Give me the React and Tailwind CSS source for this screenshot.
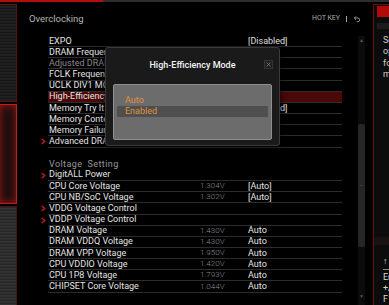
import React from 'react';

const mainRows = [
    { label: 'EXPO', value: '[Disabled]' },
    { label: 'DRAM Frequency', value: '[Auto]' },
    { label: 'Adjusted DRAM Frequency', dim: true },
    { label: 'FCLK Frequency', value: '[Auto]' },
    { label: 'UCLK DIV1 MODE', value: '[Auto]' },
    { label: 'High-Efficiency Mode', value: '[Auto]', active: true },
    { label: 'Memory Try It !', value: '[Disabled]' },
    { label: 'Memory Context Restore', value: '[Auto]' },
    { label: 'Memory Failure Retry', value: '[Auto]' },
    { label: 'Advanced DRAM Configuration', sub: true },
];

const voltageRows = [
    { label: 'DigitALL Power', sub: true },
    { label: 'CPU Core Voltage', volt: '1.304V', value: '[Auto]' },
    { label: 'CPU NB/SoC Voltage', volt: '1.302V', value: '[Auto]' },
    { label: 'VDDG Voltage Control', sub: true },
    { label: 'VDDP Voltage Control', sub: true },
    { label: 'DRAM Voltage', volt: '1.430V', value: 'Auto' },
    { label: 'DRAM VDDQ Voltage', volt: '1.430V', value: 'Auto' },
    { label: 'DRAM VPP Voltage', volt: '1.950V', value: 'Auto' },
    { label: 'CPU VDDIO Voltage', volt: '1.420V', value: 'Auto' },
    { label: 'CPU 1P8 Voltage', volt: '1.793V', value: 'Auto' },
    { label: 'CHIPSET Core Voltage', volt: '1.044V', value: 'Auto' },
];

const Chevron = () => (
    <svg viewBox="0 0 6 8" className="w-[5px] h-[7px]">
        <path d="M1 1l3.5 3L1 7" fill="none" stroke="#c81e1e" strokeWidth="1.6" />
    </svg>
);

const Row = ({ row }) => (
    <div className="flex h-[11.17px] items-center">
        <div className="w-[10px] flex items-center justify-start pl-[3px]">
            {row.sub && <Chevron />}
        </div>
        <div
            className={`flex-1 h-full flex items-center border-b border-[#2c2c2c] pl-[1px] ${row.active ? 'bg-[#4a0808]' : ''}`}
        >
            <span className={`w-[151px] whitespace-nowrap ${row.dim ? 'text-[#8a8a8a]' : 'text-[#e4e4e4]'}`}>
                {row.label}
            </span>
            <span className="w-[48px] text-[8px] font-light text-[#8c8c8c]">{row.volt}</span>
            <span className="text-[#e4e4e4] whitespace-nowrap">{row.value}</span>
        </div>
    </div>
);

const App = () => {
    return (
        <div
            className="relative w-[389px] h-[305px] overflow-hidden bg-black text-[9px] leading-none"
            style={{ fontFamily: 'Roboto, "Liberation Sans", sans-serif' }}
        >
            {/* top strip */}
            <div className="flex h-[3px]">
                <div className="w-[103px] bg-[#b50d0d] h-[2px]" />
                <div className="flex-1 bg-[#2e2e2e] h-[2px]" />
            </div>

            <div className="flex h-[302px] pt-[1px]">
                {/* left sidebar */}
                <div className="w-[17px] flex flex-col gap-[2px]">
                    <div className="h-[98px] border border-l-0 border-[#5a1212] bg-[repeating-linear-gradient(180deg,#161616_0px,#161616_1px,#222_1px,#222_2px,#1b1b1b_3px)]" />
                    <div className="h-[100px] border border-l-0 border-[#c01c1c] bg-[#1a0e0e] shadow-[inset_0_0_8px_#a01414]" />
                    <div className="flex-1 border border-l-0 border-b-0 border-[#4a1212] bg-[repeating-linear-gradient(180deg,#262626_0px,#262626_1px,#333_1px,#333_2px,#2a2a2a_3px)]" />
                </div>

                {/* main panel */}
                <div className="flex-1 flex flex-col">
                    <div className="h-[32px] flex items-center pl-[12px] pr-[12px] pb-[3px]">
                        <span className="text-[#b4b4b4] text-[9.5px]">Overclocking</span>
                        <div className="ml-auto flex items-center gap-[6px] text-[#a8a8a8] text-[7px]">
                            <span>HOT KEY</span>
                            <span className="w-px h-[6px] bg-[#a8a8a8]" />
                            <svg viewBox="0 0 24 24" className="w-[8px] h-[8px]" fill="none" stroke="#a8a8a8" strokeWidth="2.6">
                                <path d="M9 14 4 9l5-5" />
                                <path d="M4 9h10.5a5.5 5.5 0 0 1 0 11H11" />
                            </svg>
                        </div>
                    </div>

                    <div className="flex flex-1">
                        <div className="ml-[21px] w-[304px] flex flex-col">
                            {mainRows.map(r => <Row key={r.label} row={r} />)}
                            <div className="h-[11.17px]" />
                            <div className="h-[11.17px] flex items-center pl-[11px] text-[#9a9a9a] tracking-[0.4px]">
                                Voltage&nbsp; Setting
                            </div>
                            {voltageRows.map(r => <Row key={r.label} row={r} />)}
                        </div>

                        {/* scrollbar */}
                        <div className="ml-[16px] w-[7px] flex flex-col items-center pt-[2px] pb-[6px] bg-[#0b0b0b]">
                            <span className="text-[5px] text-[#555]">▲</span>
                            <div className="mt-[81px] w-[7px] h-[123px] rounded-[2px] bg-[#262626] flex items-center justify-center">
                                <div className="w-[3px] h-px bg-[#3a3a3a]" />
                            </div>
                            <span className="mt-auto text-[5px] text-[#555]">▼</span>
                        </div>
                    </div>
                </div>

                {/* right help panel */}
                <div className="w-[16px] border-l border-t border-[#6e0c0c] bg-[#0c0c0c] flex flex-col pl-[3px] overflow-hidden">
                    <div className="h-[11px] mt-px bg-[#b00a0a]" />
                    <div className="h-[6px] mt-[6px] bg-[#1c1c1c]" />
                    <div className="pl-[6px] mt-[7px] flex flex-col gap-[2.3px] text-[#cfcfcf] whitespace-nowrap leading-[9px]">
                        <span>Sets</span>
                        <span>operating</span>
                        <span>for</span>
                        <span>memory</span>
                    </div>
                    <div className="mt-auto h-[8px] bg-[#1a1212] -ml-[3px]" />
                    <div className="pl-[6px] mt-[11px] flex flex-col text-[#d8d8d8] whitespace-nowrap leading-[11px]">
                        <span className="border-b border-[#8a8a8a] pb-[2px] mb-[2px]">↑↓: Move</span>
                        <span>Enter: Select</span>
                        <span>+/-: Value</span>
                        <span>F1: General Help</span>
                    </div>
                </div>
            </div>

            {/* dialog */}
            <div className="absolute left-[105px] top-[47px] w-[175px] h-[99px] rounded-[3px] border border-[#3a3a3a] bg-[#1a1a1a] shadow-[0_0_6px_rgba(0,0,0,0.8)]">
                <div className="relative h-[34px] flex items-center justify-center">
                    <span className="text-[#f4f4f4] text-[9px] font-medium">High-Efficiency Mode</span>
                    <div className="absolute left-[158px] top-[12px] w-[9px] h-[9px] border border-[#333] bg-[#202020] flex items-center justify-center">
                        <svg viewBox="0 0 10 10" className="w-[5px] h-[5px]" stroke="#8a8a8a" strokeWidth="1.4">
                            <path d="M1 1l8 8M9 1l-8 8" />
                        </svg>
                    </div>
                </div>
                <div className="mx-[7px] mt-[2px] h-[56px] rounded-[2px] border border-[#8f8f8f] bg-[#6c6c6c] pt-[10px] px-[3px]">
                    <div className="h-[11px] flex items-center pl-[8px] text-[#e0923c]">Auto</div>
                    <div className="h-[11px] flex items-center pl-[8px] bg-[#4f4f4f] text-[#e0923c]">Enabled</div>
                </div>
            </div>
        </div>
    );
};

export default App;
